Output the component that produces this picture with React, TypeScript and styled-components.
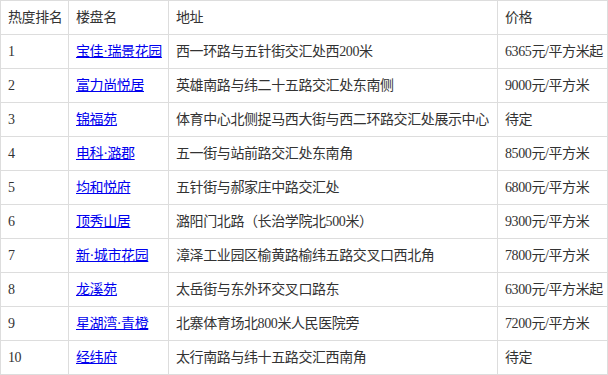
import React from 'react';
import styled, { createGlobalStyle } from 'styled-components';

const GlobalStyle = createGlobalStyle`
  body {
    margin: 0;
    background: #fff;
    font-family: "Liberation Serif", "Noto Sans CJK SC", serif;
  }
`;

const Table = styled.table`
  width: 607px;
  table-layout: fixed;
  border-collapse: collapse;
  font-size: 14px;
  color: #333;
`;

const Cell = styled.td`
  border: 1px solid #ddd;
  padding: 8px 7px;
  line-height: 17px;
  letter-spacing: -0.4px;
  white-space: nowrap;
  text-align: left;
  font-weight: normal;
`;

const HeadCell = styled(Cell).attrs({ as: 'th' })``;

const NameLink = styled.a`
  color: #0000ee;
  text-decoration: underline;
`;

interface Estate {
  name: string;
  address: string;
  price: string;
}

const estates: Estate[] = [
  { name: '宝佳·瑞景花园', address: '西一环路与五针街交汇处西200米', price: '6365元/平方米起' },
  { name: '富力尚悦居', address: '英雄南路与纬二十五路交汇处东南侧', price: '9000元/平方米' },
  { name: '锦福苑', address: '体育中心北侧捉马西大街与西二环路交汇处展示中心', price: '待定' },
  { name: '电科·潞郡', address: '五一街与站前路交汇处东南角', price: '8500元/平方米' },
  { name: '均和悦府', address: '五针街与郝家庄中路交汇处', price: '6800元/平方米' },
  { name: '顶秀山居', address: '潞阳门北路（长治学院北500米）', price: '9300元/平方米' },
  { name: '新·城市花园', address: '漳泽工业园区榆黄路榆纬五路交叉口西北角', price: '7800元/平方米' },
  { name: '龙溪苑', address: '太岳街与东外环交叉口路东', price: '6300元/平方米起' },
  { name: '星湖湾·青橙', address: '北寨体育场北800米人民医院旁', price: '7200元/平方米' },
  { name: '经纬府', address: '太行南路与纬十五路交汇西南角', price: '待定' },
];

export default function App() {
  return (
    <>
      <GlobalStyle />
      <Table>
        <colgroup>
          <col style={{ width: 68 }} />
          <col style={{ width: 100 }} />
          <col style={{ width: 329 }} />
          <col style={{ width: 110 }} />
        </colgroup>
        <thead>
          <tr>
            <HeadCell>热度排名</HeadCell>
            <HeadCell>楼盘名</HeadCell>
            <HeadCell>地址</HeadCell>
            <HeadCell>价格</HeadCell>
          </tr>
        </thead>
        <tbody>
          {estates.map((e, i) => (
            <tr key={e.name}>
              <Cell>{i + 1}</Cell>
              <Cell>
                <NameLink href="#">{e.name}</NameLink>
              </Cell>
              <Cell>{e.address}</Cell>
              <Cell>{e.price}</Cell>
            </tr>
          ))}
        </tbody>
      </Table>
    </>
  );
}
